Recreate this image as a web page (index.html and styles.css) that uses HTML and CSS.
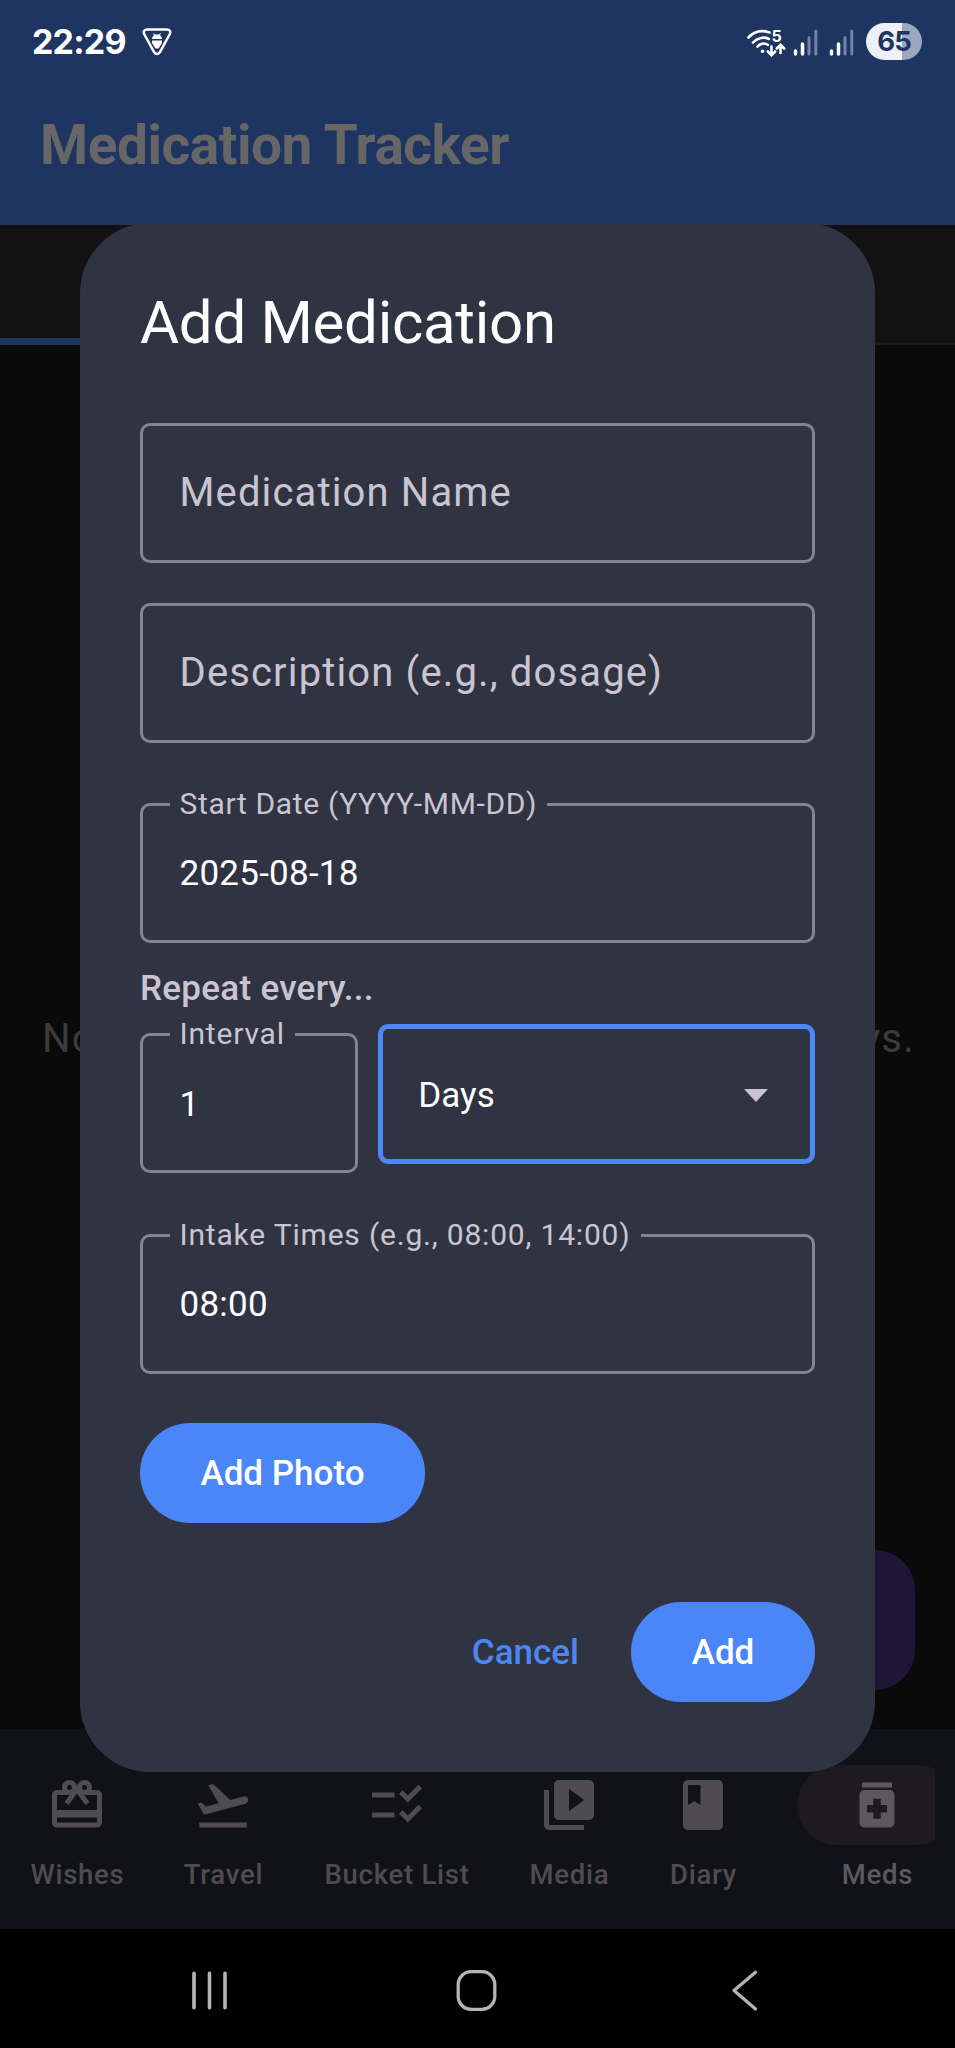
FILE: index.html
```html
<!DOCTYPE html>
<html lang="en">
<head>
<meta charset="utf-8">
<title>Medication Tracker</title>
<link rel="stylesheet" href="styles.css">
</head>
<body>
<div class="screen">
  <header class="app-header">
    <div class="status-bar">
      <div class="status-left">
        <span class="clock">22:29</span>
        <svg class="shield" viewBox="0 0 30 28" width="30" height="28">
          <path d="M5 1.500h20q4.500 0.500 2.800 4.500L18 24q-3 4-6 0L2.200 6Q0.500 2 5 1.500z" fill="none" stroke="#fff" stroke-width="2.500"/>
          <path d="M10 11q0-2.800 2-3.600l-1-2.400 2.400 1.600h3.200l2.400-1.600-1 2.400q2 .8 2 3.600zM10 12.600h10v2.400l-3.400 5.500h-3.200L10 15z" fill="#fff"/>
        </svg>
      </div>
      <div class="status-right">
        <svg class="wifi" viewBox="0 0 40 34" width="40" height="34">
          <g fill="none" stroke="#fff" stroke-width="2.600" stroke-linecap="round">
            <path d="M2.500 12.500C8 6.500 16 5 23.500 7.500"/>
            <path d="M7 17.500C11.500 12.500 18 11.500 23 14"/>
            <path d="M11.500 21.500C14.500 18 19 17.800 22 20"/>
            <path d="M25.500 21.500v8M21.800 26.500l3.700 3.700 3.700-3.700M34.500 28v-7.500M30.800 23.500l3.700-3.700 3.700 3.700"/>
          </g>
          <circle cx="16.500" cy="26.300" r="1.800" fill="#fff"/>
          <text x="25.500" y="17" class="wifi-band">5</text>
        </svg>
        <svg class="signal" viewBox="0 0 26 28" width="26" height="28">
          <path d="M2.500 23v3M9.500 16v10" stroke="#fff" stroke-width="3.500" stroke-linecap="round"/>
          <path d="M16 9.500v16.500M22.800 3v23" stroke="#7083a8" stroke-width="3" stroke-linecap="round"/>
        </svg>
        <svg class="signal" viewBox="0 0 26 28" width="26" height="28">
          <path d="M2.500 23v3M9.500 16v10" stroke="#fff" stroke-width="3.500" stroke-linecap="round"/>
          <path d="M16 9.500v16.500M22.800 3v23" stroke="#7083a8" stroke-width="3" stroke-linecap="round"/>
        </svg>
        <span class="battery">65</span>
      </div>
    </div>
    <h1 class="app-title">Medication Tracker</h1>
  </header>

  <div class="tabs"><span class="tab-active"></span><span class="tab-idle"></span></div>

  <main class="content">
    <p class="empty-note"><span>No</span><span>ys.</span></p>
    <div class="fab"></div>
  </main>

  <nav class="bottom-nav">
    <a class="nav-item nav-wishes">
      <span class="nav-icon"><svg viewBox="0 0 24 24"><path d="M20 6h-2.180c.11-.31.18-.65.18-1 0-1.660-1.340-3-3-3-1.050 0-1.960.54-2.500 1.350l-.5.67-.5-.68C10.960 2.540 10.050 2 9 2 7.340 2 6 3.340 6 5c0 .35.07.69.18 1H4c-1.110 0-1.990.89-1.990 2L2 19c0 1.110.89 2 2 2h16c1.110 0 2-.89 2-2V8c0-1.110-.89-2-2-2zm-5-2c.55 0 1 .45 1 1s-.45 1-1 1-1-.45-1-1 .45-1 1-1zM9 4c.55 0 1 .45 1 1s-.45 1-1 1-1-.45-1-1 .45-1 1-1zm11 15H4v-2h16v2zm0-5H4V8h5.080L7 10.830 8.620 12 11 8.760l1-1.360 1 1.360L15.380 12 17 10.830 14.920 8H20v6z"/></svg></span>
      <span class="nav-label">Wishes</span>
    </a>
    <a class="nav-item nav-travel">
      <span class="nav-icon"><svg viewBox="0 0 24 24"><path d="M2.500 19h19v2h-19zm19.570-9.360c-.21-.8-1.040-1.280-1.840-1.060L14.920 10l-6.900-6.430-1.930.51 4.140 7.170-4.970 1.330-1.970-1.540-1.450.39 1.820 3.160.77 1.330 1.600-.43 5.310-1.420 4.350-1.160L21 11.490c.81-.23 1.280-1.050 1.070-1.850z"/></svg></span>
      <span class="nav-label">Travel</span>
    </a>
    <a class="nav-item nav-bucket">
      <span class="nav-icon"><svg viewBox="0 0 24 24"><path d="M11 7H2v2h9V7zM11 15H2v2h9v-2zM16.340 11l-3.540-3.540 1.410-1.410 2.120 2.120 4.240-4.240L22 5.340 16.340 11zM16.340 19l-3.540-3.540 1.410-1.410 2.120 2.120 4.240-4.240L22 13.340 16.340 19z"/></svg></span>
      <span class="nav-label">Bucket List</span>
    </a>
    <a class="nav-item nav-media">
      <span class="nav-icon"><svg viewBox="0 0 24 24"><path d="M4 6H2v14c0 1.100.9 2 2 2h14v-2H4V6zm16-4H8c-1.100 0-2 .9-2 2v12c0 1.100.9 2 2 2h12c1.100 0 2-.9 2-2V4c0-1.100-.9-2-2-2zm-8 12.500v-9l6 4.500-6 4.500z"/></svg></span>
      <span class="nav-label">Media</span>
    </a>
    <a class="nav-item nav-diary">
      <span class="nav-icon"><svg viewBox="0 0 24 24"><path d="M18 2H6c-1.100 0-2 .9-2 2v16c0 1.100.9 2 2 2h12c1.100 0 2-.9 2-2V4c0-1.100-.9-2-2-2zM6 4h5v8l-2.500-1.500L6 12V4z"/></svg></span>
      <span class="nav-label">Diary</span>
    </a>
    <a class="nav-item nav-meds selected">
      <span class="nav-icon"><svg viewBox="0 0 24 24"><path d="M6 3h12v2H6zM17 6H7c-1.100 0-2 .9-2 2v11c0 1.100.9 2 2 2h10c1.100 0 2-.9 2-2V8c0-1.100-.9-2-2-2zm-1 9h-2.500v2.500h-3V15H8v-3h2.500V9.500h3V12H16v3z"/></svg></span>
      <span class="nav-label">Meds</span>
    </a>
  </nav>

  <footer class="system-nav">
    <svg viewBox="0 0 40 44" width="40" height="44"><path d="M4 4.300v34.400M19.500 4.300v34.400M35 4.300v34.400" stroke-width="3.600" stroke-linecap="round"/></svg>
    <svg viewBox="0 0 44 44" width="44" height="44"><rect x="3.200" y="2.700" width="36.600" height="37.600" rx="13" stroke-width="3.300"/></svg>
    <svg viewBox="0 0 34 44" width="34" height="44"><path d="M27.500 3.200L6 21.500 27.500 40" stroke-width="3.200" stroke-linecap="round" stroke-linejoin="round"/></svg>
  </footer>

  <section class="dialog">
    <h2 class="dialog-title">Add Medication</h2>
    <div class="field"><span class="placeholder">Medication Name</span></div>
    <div class="field"><span class="placeholder">Description (e.g., dosage)</span></div>
    <div class="field field-start"><label class="float-label">Start Date (YYYY-MM-DD)</label><span class="value">2025-08-18</span></div>
    <p class="group-label">Repeat every...</p>
    <div class="repeat-row">
      <div class="field"><label class="float-label">Interval</label><span class="value">1</span></div>
      <div class="field select"><span class="value">Days</span>
        <svg viewBox="0 0 24 13" width="24" height="13"><path d="M0 0h24L12 13z" fill="#cac4d0"/></svg>
      </div>
    </div>
    <div class="field field-intake"><label class="float-label">Intake Times (e.g., 08:00, 14:00)</label><span class="value">08:00</span></div>
    <button class="btn btn-photo">Add Photo</button>
    <div class="actions">
      <button class="btn-text">Cancel</button>
      <button class="btn btn-add">Add</button>
    </div>
  </section>
</div>
</body>
</html>
```
FILE: styles.css
```css
* { box-sizing: border-box; margin: 0; padding: 0; }

body {
  background: #000;
  font-family: Roboto, "Liberation Sans", sans-serif;
}

.screen {
  position: relative;
  display: flex;
  flex-direction: column;
  width: 955px;
  height: 2048px;
  overflow: hidden;
  background: #0a0a0a;
}

/* header */
.app-header { height: 225px; background: #1e3461; }
.status-bar {
  display: flex;
  justify-content: space-between;
  height: 65px;
  padding: 18px 33px 0 32px;
}
.status-left, .status-right { display: flex; align-items: center; height: 47px; }
.clock {
  color: #fff;
  font: 700 34px/47px Inter, sans-serif;
  letter-spacing: -0.800px;
}
.shield { margin-left: 16px; }
.wifi-band { fill: #fff; font: 700 16px Inter, sans-serif; }
.wifi { margin-right: 7px; overflow: visible; }
.signal { margin-right: 10px; }
.battery {
  width: 56px;
  height: 37px;
  margin-left: 1px;
  border-radius: 19px;
  background: linear-gradient(90deg, #edf0f6 0 36px, #9ba7bf 36px);
  color: #1e3461;
  font: 700 27.500px/37px Inter, sans-serif;
  letter-spacing: -1px;
  text-align: center;
}
.app-title {
  padding-left: 40px;
  color: #666;
  font-size: 55px;
  font-weight: 700;
  letter-spacing: -0.450px;
  line-height: 160px;
}

/* tabs */
.tabs {
  display: flex;
  align-items: flex-end;
  height: 120px;
  background: #121212;
}
.tab-active { flex: 1; height: 7px; background: #1e3461; }
.tab-idle { flex: 1; height: 2px; background: #1c1b1e; }

/* page body */
.content {
  display: flex;
  flex-direction: column;
  justify-content: space-between;
  height: 1384px;
  padding: 664px 40px 39px;
}
.empty-note {
  display: flex;
  justify-content: space-between;
  padding-left: 2px;
  color: #3b3b3b;
  font-size: 40px;
  letter-spacing: 1.250px;
  line-height: 60px;
}
.fab {
  align-self: flex-end;
  width: 140px;
  height: 140px;
  border-radius: 40px;
  background: #1f1535;
}

/* bottom navigation */
.bottom-nav {
  display: grid;
  grid-template-columns: 114px 178px 169px 176px 92px 186px;
  height: 200px;
  padding: 36px 20px 0 20px;
  overflow: hidden;
  background: #111217;
}
.nav-item {
  display: flex;
  flex-direction: column;
  align-items: center;
  color: #4f4b52;
}
.nav-icon {
  display: flex;
  align-items: center;
  justify-content: center;
  width: 160px;
  height: 80px;
}
.nav-icon svg { width: 60px; height: 60px; margin-top: -1px; fill: currentColor; }
.nav-label {
  margin-top: 10px;
  padding-left: 1px;
  font-size: 27.500px;
  font-weight: 500;
  letter-spacing: 0.750px;
  line-height: 40px;
  white-space: nowrap;
}
.selected { align-items: flex-start; overflow: hidden; padding-left: 48px; color: #5c5862; }
.selected .nav-icon { flex-shrink: 0; border-radius: 40px; background: #1e1a21; }
.selected .nav-label { width: 160px; text-align: center; }

/* system navigation */
.system-nav {
  display: grid;
  grid-template-columns: 265px 273px 34px;
  height: 119px;
  padding: 40px 0 0 190px;
  background: #000;
}
.system-nav svg { fill: none; stroke: #b4b4b4; }

/* dialog */
.dialog {
  position: absolute;
  left: 80px;
  top: 223px;
  display: flex;
  flex-direction: column;
  width: 795px;
  height: 1549px;
  padding: 60px;
  border-radius: 70px;
  background: #303442;
}
.dialog-title {
  margin-bottom: 60px;
  color: #fff;
  font-size: 60px;
  font-weight: 400;
  letter-spacing: -0.300px;
  line-height: 80px;
}
.field {
  position: relative;
  display: flex;
  align-items: center;
  height: 140px;
  margin-bottom: 40px;
  padding: 0 36.500px;
  border: 3px solid #858390;
  border-radius: 10px;
}
.placeholder {
  padding-bottom: 1px;
  color: #cac4d0;
  font-size: 40px;
  letter-spacing: 1.140px;
}
.value { color: #fff; font-size: 35px; letter-spacing: 0.250px; }
.float-label {
  position: absolute;
  left: 27px;
  top: -22px;
  padding: 0 10px 0 9.500px;
  background: #303442;
  color: #cac4d0;
  font-size: 30px;
  letter-spacing: 0.810px;
  line-height: 40px;
  white-space: nowrap;
}
.field-start { margin: 20px 0; }
.field-start .float-label { letter-spacing: 0.650px; }
.group-label {
  padding-top: 1px;
  color: #cac4d0;
  font-size: 35px;
  font-weight: 500;
  letter-spacing: 0.280px;
  line-height: 49px;
}
.repeat-row {
  display: grid;
  grid-template-columns: 1fr 2fr;
  align-items: start;
  gap: 20px;
  height: 160px;
}
.repeat-row .field { margin: 20px 0 0; padding-top: 2px; }
.repeat-row .select {
  justify-content: space-between;
  margin-top: 11px;
  padding: 2px 42px 0 35px;
  border: 5px solid #4d86f7;
}
.select .value { letter-spacing: 0; }
.field-intake { margin: 61px 0 49px; }
.btn, .btn-text {
  padding-top: 1px;
  border: 0;
  font: 500 35px/99px Roboto, sans-serif;
  letter-spacing: 0;
}
.btn {
  height: 100px;
  border-radius: 50px;
  background: #4a86f8;
  color: #fff;
}
.btn-photo { width: 285px; }
.btn-add { width: 184px; }
.btn-text { background: none; color: #4d86f0; }
.actions {
  display: flex;
  justify-content: flex-end;
  gap: 52px;
  margin-top: 79px;
}
```
